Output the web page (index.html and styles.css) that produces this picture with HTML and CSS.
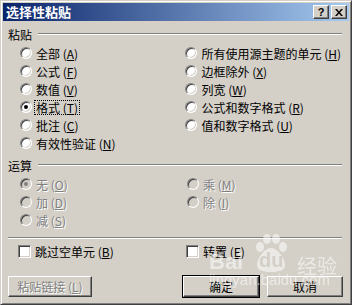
FILE: index.html
```html
<!DOCTYPE html>
<html>
<head>
	<meta charset="utf-8">
	<title>选择性粘贴</title>
	<link rel="stylesheet" href="styles.css">
</head>
<body>
	<div class="dialog">
		<div class="titlebar">
			<span class="title">选择性粘贴</span>
			<div class="caption-buttons">
				<span class="cap-btn cap-help">?</span>
				<span class="cap-btn cap-close">
					<svg width="8" height="7" viewBox="0 0 8 7"><path d="M0 0h2l2 2.5L6 0h2L5 3.5 8 7H6L4 4.5 2 7H0l3-3.5z" fill="#000"/></svg>
				</span>
			</div>
		</div>

		<div class="content">
			<div class="group-head"><span>粘贴</span><i class="rule"></i></div>
			<div class="options">
				<div class="col col-left">
					<div class="opt"><span class="radio"></span><span class="label">全部 (<u>A</u>)</span></div>
					<div class="opt"><span class="radio"></span><span class="label">公式 (<u>F</u>)</span></div>
					<div class="opt"><span class="radio"></span><span class="label">数值 (<u>V</u>)</span></div>
					<div class="opt"><span class="radio checked"></span><span class="label focus">格式 (<u>T</u>)</span></div>
					<div class="opt"><span class="radio"></span><span class="label">批注 (<u>C</u>)</span></div>
					<div class="opt"><span class="radio"></span><span class="label">有效性验证 (<u>N</u>)</span></div>
				</div>
				<div class="col">
					<div class="opt"><span class="radio"></span><span class="label">所有使用源主题的单元 (<u>H</u>)</span></div>
					<div class="opt"><span class="radio"></span><span class="label">边框除外 (<u>X</u>)</span></div>
					<div class="opt"><span class="radio"></span><span class="label">列宽 (<u>W</u>)</span></div>
					<div class="opt"><span class="radio"></span><span class="label">公式和数字格式 (<u>R</u>)</span></div>
					<div class="opt"><span class="radio"></span><span class="label">值和数字格式 (<u>U</u>)</span></div>
				</div>
			</div>

			<div class="group-head second"><span>运算</span><i class="rule"></i></div>
			<div class="options disabled">
				<div class="col col-left">
					<div class="opt"><span class="radio checked"></span><span class="label">无 (<u>O</u>)</span></div>
					<div class="opt"><span class="radio"></span><span class="label">加 (<u>D</u>)</span></div>
					<div class="opt"><span class="radio"></span><span class="label">减 (<u>S</u>)</span></div>
				</div>
				<div class="col">
					<div class="opt"><span class="radio"></span><span class="label">乘 (<u>M</u>)</span></div>
					<div class="opt"><span class="radio"></span><span class="label">除 (<u>I</u>)</span></div>
				</div>
			</div>

			<div class="separator"></div>

			<div class="checks">
				<div class="opt check-left"><span class="checkbox"></span><span class="label">跳过空单元 (<u>B</u>)</span></div>
				<div class="opt"><span class="checkbox"></span><span class="label">转置 (<u>E</u>)</span></div>
			</div>

			<div class="buttons">
				<button class="btn btn-disabled">粘贴链接 (<u>L</u>)</button>
				<button class="btn btn-default">确定</button>
				<button class="btn">取消</button>
			</div>
		</div>

		<div class="watermark">
			<span class="wm-bai">Bai</span>
			<svg class="wm-paw" width="40" height="40" viewBox="0 0 40 40">
				<ellipse cx="9" cy="14" rx="4" ry="5" fill="#fff"/>
				<ellipse cx="16" cy="6" rx="4" ry="5" fill="#fff"/>
				<ellipse cx="25" cy="6" rx="4" ry="5" fill="#fff"/>
				<ellipse cx="32" cy="14" rx="4" ry="5" fill="#fff"/>
				<path d="M20 15c6 0 14 10 14 17 0 5-5 7-14 7S6 37 6 32c0-7 8-17 14-17z" fill="#fff"/>
			</svg>
			<span class="wm-du">du</span>
			<span class="wm-jy">经验</span>
			<span class="wm-url">jingyan.baidu.com</span>
		</div>
	</div>
</body>
</html>
```

FILE: styles.css
```css
body {
	margin: 0;
	font-family: "Noto Sans CJK SC", "Liberation Sans", sans-serif;
	font-size: 12px;
	color: #000;
}

.dialog {
	position: relative;
	width: 352px;
	height: 305px;
	box-sizing: border-box;
	background: #d4d0c8;
	border: 1px solid;
	border-color: #d4d0c8 #404040 #404040 #d4d0c8;
	box-shadow: inset 1px 1px 0 #fff, inset -1px -1px 0 #808080;
	padding: 2px;
	overflow: hidden;
}

.titlebar {
	height: 18px;
	display: flex;
	align-items: center;
	justify-content: space-between;
	padding: 0 2px 0 3px;
	background: linear-gradient(to right, #0a246a, #a6caf0);
}

.title {
	color: #fff;
	font-weight: bold;
	font-size: 13px;
	line-height: 18px;
}

.caption-buttons {
	display: flex;
	gap: 2px;
}

.cap-btn {
	width: 16px;
	height: 14px;
	box-sizing: border-box;
	background: #d4d0c8;
	border: 1px solid;
	border-color: #fff #404040 #404040 #fff;
	box-shadow: inset -1px -1px 0 #808080;
	display: flex;
	align-items: center;
	justify-content: center;
	font-family: "Liberation Sans", sans-serif;
	font-weight: bold;
	font-size: 11px;
	line-height: 1;
}

.content {
	padding: 5px 7px 0 5px;
}

.group-head {
	display: flex;
	align-items: center;
	height: 16px;
	margin-bottom: 2px;
}

.group-head.second {
	margin-top: 5px;
}

.rule {
	flex: 1;
	height: 0;
	margin-left: 6px;
	border-top: 1px solid #808080;
	border-bottom: 1px solid #fff;
}

.options {
	display: flex;
	padding-left: 12px;
}

.col-left {
	width: 167px;
}

.opt {
	display: flex;
	align-items: center;
	height: 18px;
	white-space: nowrap;
}

.label {
	margin-left: 3px;
	padding: 0 1px;
	line-height: 13px;
}

.label u {
	text-underline-offset: 1px;
}

.focus {
	outline: 1px dotted #000;
}

.radio {
	position: relative;
	width: 12px;
	height: 12px;
	box-sizing: border-box;
	border-radius: 50%;
	background: #fff;
	border: 1px solid;
	border-color: #808080 #fff #fff #808080;
	box-shadow: inset 1px 1px 0 #404040, inset -1px -1px 0 #d4d0c8;
}

.radio.checked::after {
	content: "";
	position: absolute;
	left: 3px;
	top: 3px;
	width: 4px;
	height: 4px;
	border-radius: 50%;
	background: #000;
}

.disabled .radio {
	background: #d4d0c8;
}

.disabled .radio.checked::after {
	background: #808080;
}

.disabled .label {
	color: #808080;
	text-shadow: 1px 1px 0 #fff;
}

.separator {
	margin-top: 8px;
	border-top: 1px solid #808080;
	border-bottom: 1px solid #fff;
}

.checks {
	display: flex;
	margin-top: 3px;
	padding-left: 10px;
}

.check-left {
	width: 168px;
}

.checkbox {
	width: 13px;
	height: 13px;
	box-sizing: border-box;
	background: #fff;
	border: 1px solid;
	border-color: #808080 #fff #fff #808080;
	box-shadow: inset 1px 1px 0 #404040, inset -1px -1px 0 #d4d0c8;
}

.buttons {
	display: flex;
	gap: 8px;
	margin-top: 16px;
	margin-right: -1px;
}

.btn {
	height: 21px;
	width: 76px;
	padding: 0;
	font: inherit;
	background: #d4d0c8;
	border: 1px solid;
	border-color: #fff #404040 #404040 #fff;
	box-shadow: inset -1px -1px 0 #808080;
	color: #000;
}

.btn-disabled {
	width: 84px;
	margin-right: auto;
	color: #808080;
	text-shadow: 1px 1px 0 #fff;
}

.btn-default {
	outline: 1px solid #000;
}

.watermark {
	position: absolute;
	left: 206px;
	top: 230px;
	width: 146px;
	height: 60px;
	opacity: 0.55;
	color: #fff;
	pointer-events: none;
}

.wm-bai {
	position: absolute;
	left: 2px;
	top: 18px;
	font-family: "Liberation Sans", sans-serif;
	font-weight: bold;
	font-size: 22px;
}

.wm-paw {
	position: absolute;
	left: 44px;
	top: 2px;
}

.wm-du {
	position: absolute;
	left: 52px;
	top: 18px;
	font-family: "Liberation Sans", sans-serif;
	font-weight: bold;
	font-size: 20px;
	color: #d4d0c8;
}

.wm-jy {
	position: absolute;
	left: 90px;
	top: 20px;
	font-size: 20px;
}

.wm-url {
	position: absolute;
	left: 2px;
	top: 40px;
	font-family: "Liberation Sans", sans-serif;
	font-size: 15px;
}
```
